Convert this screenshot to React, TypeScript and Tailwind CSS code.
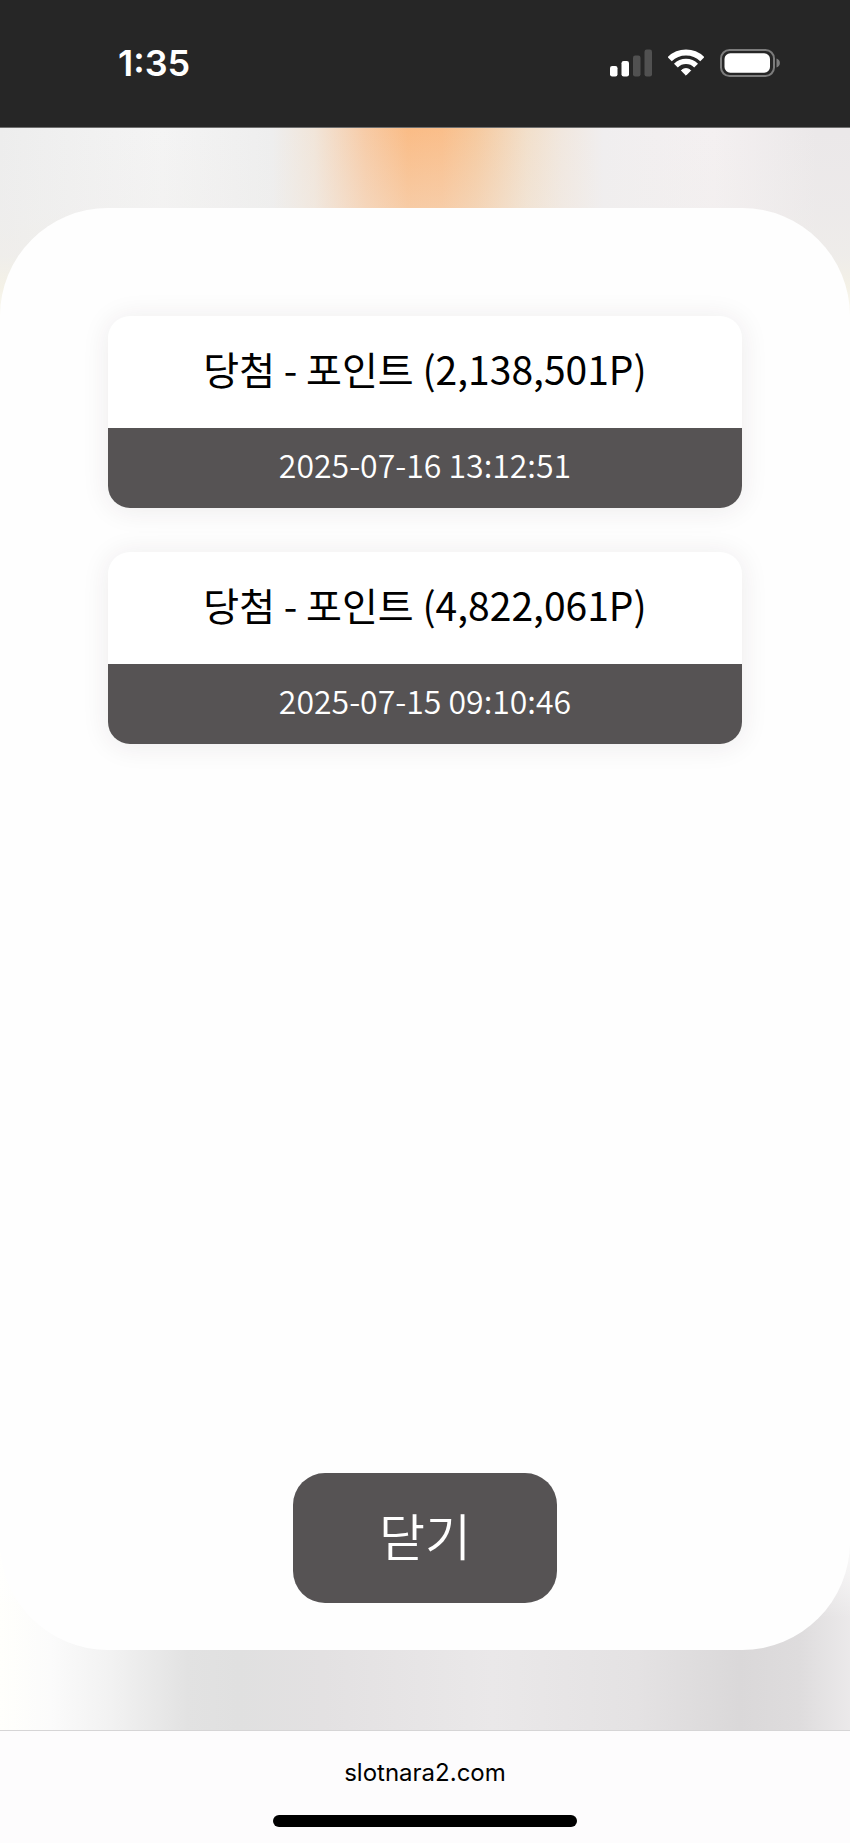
import { useState } from 'react';

type Win = {
  id: number;
  title: string;
  date: string;
};

const wins: Win[] = [
  { id: 1, title: '당첨 - 포인트 (2,138,501P)', date: '2025-07-16 13:12:51' },
  { id: 2, title: '당첨 - 포인트 (4,822,061P)', date: '2025-07-15 09:10:46' },
];

function SignalIcon() {
  return (
    <svg className="h-7 w-[42px]" viewBox="0 0 42 28" aria-hidden="true">
      <rect x="0" y="17" width="7.5" height="10.5" rx="2.2" fill="#fff" />
      <rect x="11.5" y="12" width="7.5" height="15.5" rx="2.2" fill="#fff" />
      <rect x="23" y="6.5" width="7.5" height="21" rx="2.2" fill="#515151" />
      <rect x="34.5" y="0.5" width="7.5" height="27" rx="2.2" fill="#515151" />
    </svg>
  );
}

function WifiIcon() {
  return (
    <svg className="h-7 w-9" viewBox="0 0 36 28" fill="none" aria-hidden="true">
      <path d="M1.7 10.2 A23.2 23.2 0 0 1 34.3 10.2" stroke="#fff" strokeWidth="5.8" />
      <path d="M7.9 16.6 A14.3 14.3 0 0 1 28.1 16.6" stroke="#fff" strokeWidth="5.4" />
      <path d="M13.3 21.5 A6.8 6.8 0 0 1 22.7 21.5 L18 26.2 Z" fill="#fff" stroke="#fff" strokeWidth="1" strokeLinejoin="round" />
    </svg>
  );
}

function BatteryIcon() {
  return (
    <svg className="h-7 w-[60px]" viewBox="0 0 60 28" fill="none" aria-hidden="true">
      <rect x="1" y="1" width="53" height="26" rx="8.5" stroke="#7c7c7c" strokeWidth="2" />
      <rect x="4.5" y="4.2" width="45.5" height="19.6" rx="5.8" fill="#fff" />
      <path d="M56.5 9.5 C61 11 61 17 56.5 18.5 Z" fill="#7c7c7c" />
    </svg>
  );
}

function WinCard({ title, date }: Win) {
  return (
    <li className="overflow-hidden rounded-[22px] bg-white text-center shadow-[0_2px_28px_rgba(60,30,40,0.09)]">
      <h2 className="flex h-28 items-center justify-center pb-2 text-[39px] leading-none text-black">{title}</h2>
      <p className="flex h-20 items-center justify-center bg-[#565354] pb-2 text-[32px] leading-none font-[350] text-white">
        <time>{date}</time>
      </p>
    </li>
  );
}

export default function App() {
  const [open, setOpen] = useState(true);

  return (
    <div className="flex min-h-screen flex-col bg-white font-['Noto_Sans_CJK_KR',sans-serif]">
      {/* Status bar */}
      <header className="flex h-32 items-center justify-between border-b border-[#6f6f6f] bg-[#262626] pr-[70px] pb-0.5 pl-[118px]">
        <span className="font-['Inter',sans-serif] text-4xl font-semibold text-white">1:35</span>
        <div className="flex items-center gap-4">
          <SignalIcon />
          <WifiIcon />
          <BatteryIcon />
        </div>
      </header>

      {/* Page backdrop: warm glow on top, grey shades at the bottom */}
      <main className="flex flex-1 flex-col bg-[linear-gradient(to_bottom,transparent_0%,rgba(240,238,236,0.3)_10%,rgba(240,238,234,0.7)_16%,rgba(245,242,230,0.9)_20%,#fffffb_26%),linear-gradient(to_right,#ededed_0%,#f4f4f4_19%,#eeeeee_32%,#f1e5d9_37%,#f7cba6_43%,#fabc86_48%,#fabe8a_52%,#f6c99e_56%,#f2dfca_62%,#f1e7de_66%,#f0eeef_71%,#f4f0f1_84%,#ebe8e9_96%),linear-gradient(to_top,transparent_0%,transparent_14%,#fff_26%),linear-gradient(to_right,#fffffc_0%,#fbfbfb_6%,#f2f2f2_13%,#e2e2e2_22%,#e0e0e0_28%,#e3e1e2_38%,#eae8e9_58%,#e4e2e3_75%,#dad8d9_87%,#dedcdd_94%,#ebe9ea_100%)] bg-size-[100%_50%] bg-position-[top,top,bottom,bottom] bg-no-repeat py-20">
        {open && (
          <section role="dialog" className="flex flex-1 flex-col rounded-[108px] bg-[#fefefe] px-27 pt-27 pb-[47px]">
            <ul className="flex flex-col gap-11">
              {wins.map((win) => (
                <WinCard key={win.id} {...win} />
              ))}
            </ul>
            <button
              type="button"
              onClick={() => setOpen(false)}
              className="mx-auto mt-auto h-[130px] w-66 rounded-4xl bg-[#565354] pb-2 text-[50px] leading-none font-[350] text-white"
            >
              닫기
            </button>
          </section>
        )}
      </main>

      {/* Browser address bar */}
      <footer className="flex flex-col items-center border-t border-[#d6d5d6] bg-[#fdfcfd] pt-6 pb-4">
        <a href="#" className="font-['Inter',sans-serif] text-2xl leading-9 text-black">
          slotnara2.com
        </a>
        <div className="mt-6 h-3 w-76 rounded-full bg-black"></div>
      </footer>
    </div>
  );
}
